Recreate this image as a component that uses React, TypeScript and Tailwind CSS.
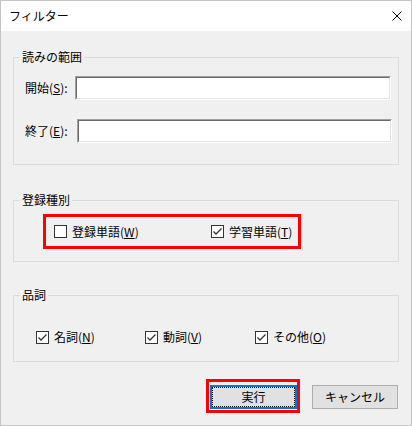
import type { ReactNode } from 'react'

// Windows 風のチェックボックス（13px の四角 + チェック）
function CheckBox({ checked }: { checked: boolean }) {
  return (
    <span className="flex h-[13px] w-[13px] shrink-0 items-center justify-center border border-[#333333] bg-white">
      {checked && (
        <svg viewBox="0 0 11 11" width="11" height="11" aria-hidden="true">
          <path d="M1.5 5.5 L4 8 L9.5 2.5" fill="none" stroke="#333333" strokeWidth="1.3" />
        </svg>
      )}
    </span>
  )
}

function Check({
  checked,
  label,
  keyChar,
  className = '',
}: {
  checked: boolean
  label: string
  keyChar: string
  className?: string
}) {
  return (
    <label className={`flex h-[16px] items-center gap-[5px] ${className}`}>
      <CheckBox checked={checked} />
      <span>
        {label}(<span className="underline">{keyChar}</span>)
      </span>
    </label>
  )
}

// グループボックス：枠線の上に見出しを重ねる
function GroupBox({
  title,
  className,
  children,
}: {
  title: string
  className: string
  children: ReactNode
}) {
  return (
    <div className={`relative border border-[#dcdcdc] ${className}`}>
      <span className="absolute left-[6px] top-[-9px] bg-[#f0f0f0] px-[2px] leading-[16px]">
        {title}
      </span>
      {children}
    </div>
  )
}

// くぼんだテキストボックス
function TextBox() {
  return (
    <div className="h-[24px] flex-1 border border-t-[#a0a0a0] border-l-[#a0a0a0] border-r-white border-b-white">
      <div className="h-full w-full border border-t-[#696969] border-l-[#696969] border-r-[#e3e3e3] border-b-[#e3e3e3] bg-white" />
    </div>
  )
}

export default function App() {
  return (
    <div
      className="h-[426px] w-[412px] border border-[#c4c4c4] bg-[#f0f0f0] text-[12px] leading-[16px] text-black"
      style={{ fontFamily: '"Noto Sans CJK JP", "Noto Sans", sans-serif' }}
    >
      {/* タイトルバー */}
      <div className="flex h-[30px] items-center justify-between bg-white pl-[8px] pr-[9px]">
        <span>フィルター</span>
        <svg viewBox="0 0 10 10" width="10" height="10" aria-hidden="true">
          <path d="M0.5 0.5 L9.5 9.5 M9.5 0.5 L0.5 9.5" stroke="#000" strokeWidth="1" />
        </svg>
      </div>

      <div className="flex flex-col px-[12px]">
        <GroupBox title="読みの範囲" className="mt-[26px] pt-[18px] pb-[21px]">
          <div className="flex items-center pl-[11px] pr-[7px]">
            <span className="w-[50px]">
              開始(<span className="underline">S</span>):
            </span>
            <TextBox />
          </div>
          <div className="mt-[19px] flex items-center pl-[11px] pr-[6px]">
            <span className="w-[52px]">
              終了(<span className="underline">E</span>):
            </span>
            <TextBox />
          </div>
        </GroupBox>

        <GroupBox title="登録種別" className="mt-[35px] pt-[13px] pb-[12px]">
          <div className="ml-[29px] flex h-[35px] w-[258px] items-center border-[3px] border-[#ff0000] pl-[8px]">
            <Check checked={false} label="登録単語" keyChar="W" className="w-[157px]" />
            <Check checked label="学習単語" keyChar="T" />
          </div>
        </GroupBox>

        <GroupBox title="品詞" className="mt-[33px] pt-[33px] pb-[16px]">
          <div className="flex pl-[22px]">
            <Check checked label="名詞" keyChar="N" className="w-[109px]" />
            <Check checked label="動詞" keyChar="V" className="w-[110px]" />
            <Check checked label="その他" keyChar="O" />
          </div>
        </GroupBox>

        <div className="mt-[23px] flex justify-end gap-[15px] pr-[1px]">
          <div className="relative">
            <button className="relative flex h-[24px] w-[87px] items-center justify-center border-2 border-[#0078d7] bg-[#e1e1e1]">
              <span className="absolute inset-0 border border-dotted border-black" />
              実行
            </button>
            <span className="pointer-events-none absolute -bottom-[4px] -left-[4px] -right-[3px] -top-[6px] border-[3px] border-[#ff0000]" />
          </div>
          <button className="flex h-[24px] w-[86px] items-center justify-center border border-[#adadad] bg-[#e1e1e1]">
            キャンセル
          </button>
        </div>
      </div>
    </div>
  )
}
